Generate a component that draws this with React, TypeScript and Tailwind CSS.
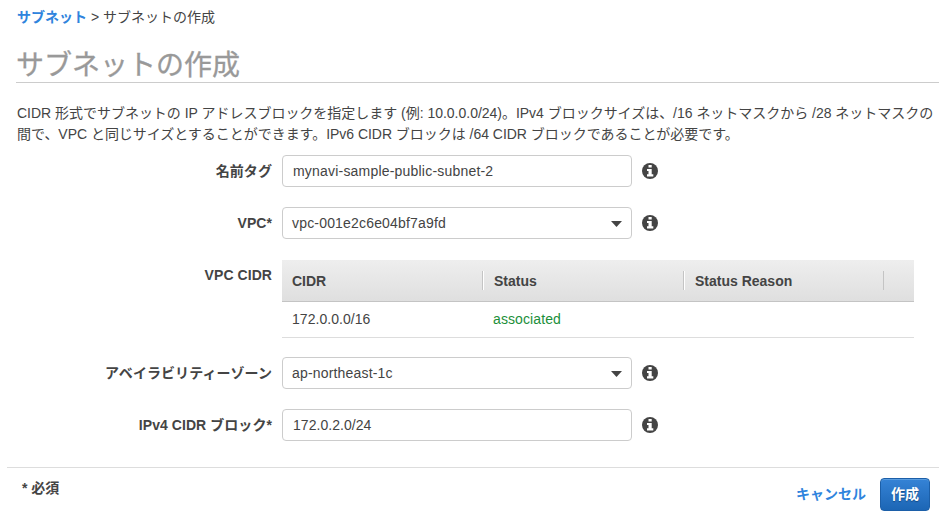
import type { ReactNode } from 'react';

function Row({ label, children, className, labelClass = 'pt-[6px]' }: { label: string; children: ReactNode; className: string; labelClass?: string }) {
  return (
    <div className={`flex items-start ${className}`}>
      <div className={`w-[272px] shrink-0 text-right font-bold tracking-[0.06px] leading-[21px] whitespace-nowrap ${labelClass}`}>{label}</div>
      <div className="ml-[10px] flex items-center">{children}</div>
    </div>
  );
}

function Info() {
  return (
    <svg className="ml-[10px] size-4 shrink-0" viewBox="0 0 16 16">
      <circle cx="8" cy="8" r="8" fill="#444" />
      <path d="M6.5 2H9.7V4.6H6.5ZM5 5.9H9.7V11.3H11.3V13.5H5V11.3H6.5V8H5Z" fill="#fff" />
    </svg>
  );
}

function TextBox({ value, className = '' }: { value: string; className?: string }) {
  return (
    <>
      <div className={`flex h-8 w-[350px] items-center rounded-[4px] border border-[#ccc] bg-white pl-[10px] ${className}`}>{value}</div>
      <Info />
    </>
  );
}

function SelectBox({ value }: { value: string }) {
  return (
    <>
      <div className="flex h-8 w-[350px] items-center justify-between rounded-[4px] border border-[#ccc] bg-white pr-[9px] pl-[9px]">
        <span className="tracking-[0.18px]">{value}</span>
        <svg width="11" height="6" viewBox="0 0 11 6" className="mt-[2px]">
          <path d="M0 0H11L5.5 6Z" fill="#444" />
        </svg>
      </div>
      <Info />
    </>
  );
}

function HeadCell({ children, className }: { children?: ReactNode; className: string }) {
  return (
    <div className={`flex h-[41px] items-center pt-[2px] ${className}`}>
      {children}
    </div>
  );
}

function Divider() {
  return <div className="h-[19px] w-[2px] shrink-0 border-r border-l border-r-white border-l-[#c4c4c4]" />;
}

export default function App() {
  return (
    <div className="h-[525px] w-[948px] overflow-hidden bg-white font-['Liberation_Sans','Noto_Sans_CJK_JP',sans-serif] text-[14px] leading-[21px] text-[#444]">
      <nav className="mt-[7px] flex h-[21px] pl-[17px] whitespace-pre">
        <a className="font-bold text-[#2f84dd]">サブネット</a>
        <span> &gt; サブネットの作成</span>
      </nav>
      <h1 className="mt-[16px] ml-4 h-[39px] w-[923px] border-b border-[#ccc] text-[28px] leading-[43px] text-[#999] [-webkit-text-stroke:0.3px_#999]">サブネットの作成</h1>
      <p className="mt-[20px] pl-[17px] whitespace-nowrap">
        <span className="block tracking-[-0.02px]">CIDR 形式でサブネットの IP アドレスブロックを指定します (例: 10.0.0.0/24)。IPv4 ブロックサイズは、/16 ネットマスクから /28 ネットマスクの</span>
        <span className="block tracking-[-0.03px]">間で、VPC と同じサイズとすることができます。IPv6 CIDR ブロックは /64 CIDR ブロックであることが必要です。</span>
      </p>
      <form className="mt-[10px]">
        <Row label="名前タグ" className="h-[52px]">
          <TextBox value="mynavi-sample-public-subnet-2" className="tracking-[0.2px]" />
        </Row>
        <Row label="VPC*" className="h-[53px]">
          <SelectBox value="vpc-001e2c6e04bf7a9fd" />
        </Row>
        <Row label="VPC CIDR" className="h-[97px]" labelClass="pt-[5px]">
          <div className="w-[632px]">
            <div className="flex h-[42px] items-center border-b border-[#c4c4c4] bg-linear-to-b from-[#eee] to-[#dfdfdf] font-bold">
              <HeadCell className="w-[200px] pl-[10px]">CIDR</HeadCell>
              <Divider />
              <HeadCell className="w-[199px] pl-[10px]">Status</HeadCell>
              <Divider />
              <HeadCell className="w-[198px] pl-[10px]">Status Reason</HeadCell>
              <div className="h-[19px] w-px bg-[#c4c4c4]" />
            </div>
            <div className="flex h-[36px] items-center border-b border-[#ddd]">
              <div className="w-[211px] pl-[10px] tracking-[0.05px]">172.0.0.0/16</div>
              <div className="tracking-[0.1px] text-[#1b8f3a]">associated</div>
            </div>
          </div>
        </Row>
        <Row label="アベイラビリティーゾーン" className="h-[52px]">
          <SelectBox value="ap-northeast-1c" />
        </Row>
        <Row label="IPv4 CIDR ブロック*" className="h-[58px]">
          <TextBox value="172.0.2.0/24" className="tracking-[0.05px]" />
        </Row>
      </form>
      <footer className="ml-[7px] flex w-[932px] justify-between border-t border-[#ddd]">
        <div className="mt-[10px] pl-[15px] font-bold">* 必須</div>
        <div className="mt-[10px] flex h-[33px] items-center pr-[9px] font-bold">
          <a className="mr-[14px] text-[#2f84dd]">キャンセル</a>
          <button type="button" className="h-[33px] w-[50px] rounded-[4px] border border-[#1c5fa8] bg-linear-to-b from-[#3583d6] to-[#1c66b5] font-bold text-white inset-shadow-[0_1px_0_#5a9de0] text-shadow-[0_1px_1px_#124a86]">作成</button>
        </div>
      </footer>
    </div>
  );
}
